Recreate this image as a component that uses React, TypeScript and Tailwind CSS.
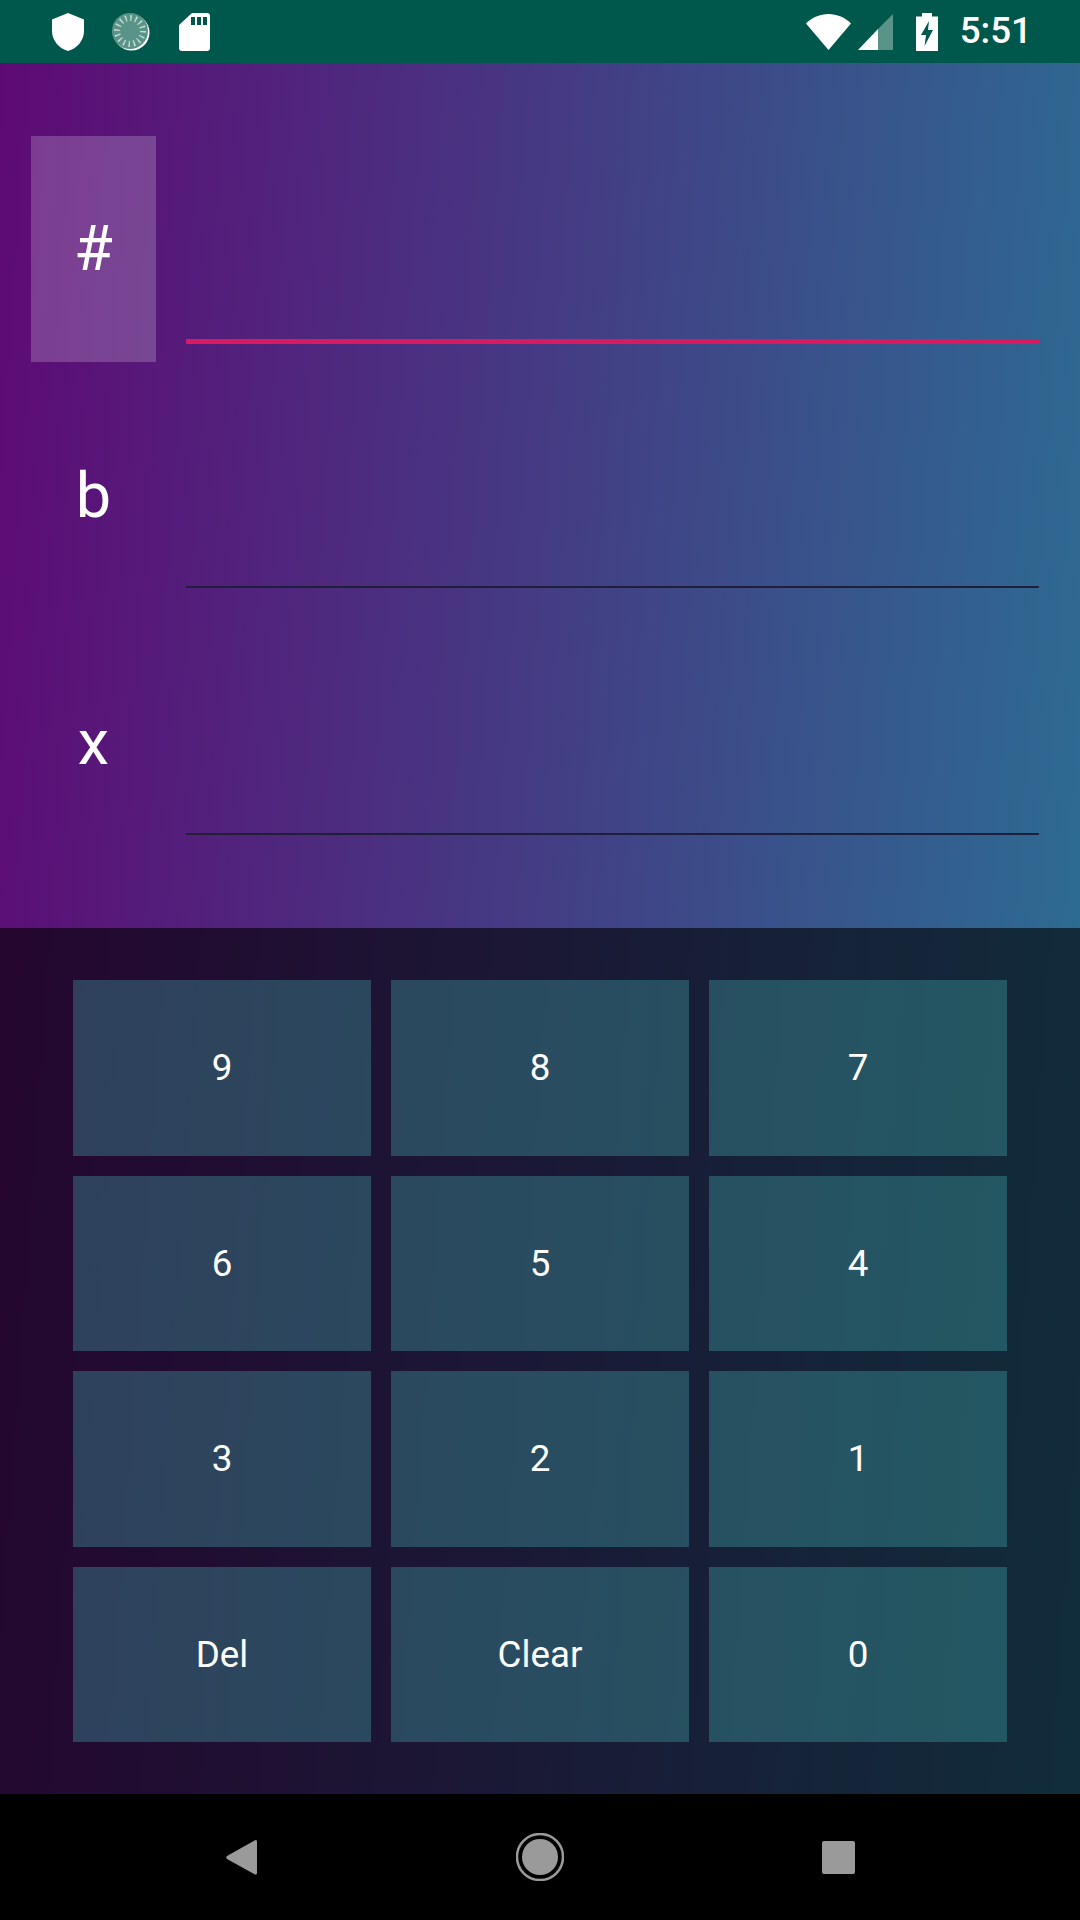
const font = { fontFamily: 'Roboto, sans-serif' }

const keys = ['9', '8', '7', '6', '5', '4', '3', '2', '1', 'Del', 'Clear', '0']
const fields = [
  { label: '#', active: true },
  { label: 'b', active: false },
  { label: 'x', active: false },
]

function StatusBar() {
  return (
    <div className="h-[63px] bg-[#00574b] flex items-center justify-between pl-[52px] pr-[48px] text-white">
      <div className="flex items-center">
        <svg width="32" height="38" viewBox="0 0 32 38" fill="#fff">
          <path d="M16 0 32 6.5V18C32 27.5 25 35.5 16 38 7 35.5 0 27.500 0 18V6.500Z" />
        </svg>
        <svg className="ml-[28px]" width="38" height="38" viewBox="0 0 38 38">
          <circle cx="19.500" cy="19.500" r="18" fill="#fff" />
          <circle cx="18" cy="18" r="18" fill="#5a9488" />
          <circle cx="18" cy="18" r="12.500" fill="none" stroke="#c4dad5" strokeWidth="7" strokeDasharray="1.400 3.500" />
          <circle cx="18" cy="18" r="10" fill="#5a9488" />
        </svg>
        <svg className="ml-[29px]" width="31" height="38" viewBox="0 0 31 38" fill="#fff">
          <path d="M13 0H28Q31 0 31 3V35Q31 38 28 38H3Q0 38 0 35V12Z" />
          <path d="M12 4h4v8h-4zM18 4h4v8h-4zM24 4h4v8h-4z" fill="#00574b" />
        </svg>
      </div>
      <div className="flex items-center">
        <svg width="45" height="36" viewBox="0 0 45 36" fill="#fff">
          <path d="M0 9.500C6 3.500 14 0 22.500 0S39 3.500 45 9.500L22.500 36Z" />
        </svg>
        <svg className="ml-[7px]" width="35" height="36" viewBox="0 0 35 36">
          <path d="M35 0V36H20V15Z" fill="#5a9488" />
          <path d="M20 15V36H0Z" fill="#fff" />
        </svg>
        <svg className="ml-[23px]" width="22" height="38" viewBox="0 0 22 38" fill="#fff">
          <path d="M6 0h10v3.500h6V38H0V3.500h6Z" />
          <path d="M13 8 5 22h5l-1.500 11L17 17h-5Z" fill="#00574b" />
        </svg>
        <span className="ml-[22px] text-[36.750px] leading-none font-medium" style={font}>5:51</span>
      </div>
    </div>
  )
}

function NavBar() {
  return (
    <div className="h-[126px] bg-black flex items-center justify-center">
      <svg width="31" height="35" viewBox="0 0 31 35" fill="#9a9a9a">
        <path d="M30 0Q31 0 31 2V33Q31 35 29 34.500L1 19Q-.500 17.500 1 16L29 .300Z" />
      </svg>
      <svg className="ml-[259px]" width="48" height="48" viewBox="0 0 48 48">
        <circle cx="24" cy="24" r="23" fill="none" stroke="#9a9a9a" strokeWidth="2.500" />
        <circle cx="24" cy="24" r="18" fill="#9a9a9a" />
      </svg>
      <div className="ml-[258px] w-[33px] h-[33px] bg-[#9a9a9a] rounded-[2px]" />
    </div>
  )
}

export default function App() {
  return (
    <div className="w-[1080px] h-[1920px] flex flex-col overflow-hidden" style={font}>
      <StatusBar />
      <div className="flex-1 flex flex-col bg-[linear-gradient(94deg,#5e0a75_0%,#3d4a88_62%,#2b7094_100%)]">
        <div className="h-[865px] px-[31px] pt-[73px] flex flex-col gap-[21px]">
          {fields.map((f) => (
            <div key={f.label} className="h-[226px] flex">
              <div className={`w-[125px] h-full flex items-center justify-center text-white text-[63px] ${f.active ? 'bg-white/20' : ''}`}>
                {f.label}
              </div>
              <div className="ml-[30px] w-[853px] h-full">
                <div className={`w-full mt-[203px] ${f.active ? 'h-[5px] bg-[#d81b60]' : 'h-[2px] bg-[#1f1f3a]'}`} />
              </div>
            </div>
          ))}
        </div>
        <div className="flex-1 bg-black/60 px-[73px] py-[52px] grid grid-cols-3 grid-rows-4 gap-[20px]">
          {keys.map((k) => (
            <button key={k} className="bg-[#4cc3c2]/30 text-white text-[36.750px] flex items-center justify-center">
              {k}
            </button>
          ))}
        </div>
      </div>
      <NavBar />
    </div>
  )
}
